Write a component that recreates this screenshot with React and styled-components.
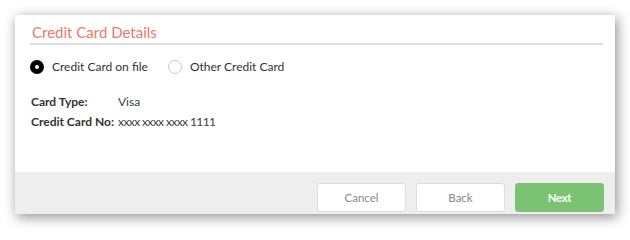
import React, { useState } from "react";
import styled, { createGlobalStyle } from "styled-components";

const Global = createGlobalStyle`
  html, body { margin: 0; padding: 0; background: #fff; }
  body { font-family: Lato, "Liberation Sans", sans-serif; color: #333; }
  * { box-sizing: border-box; }
`;

const Page = styled.div`
  padding: 15px;
  width: 630px;
  height: 230px;
`;

const Card = styled.div`
  width: 600px;
  height: 199px;
  background: #fff;
  box-shadow: 2px 3px 12px rgba(0, 0, 0, 0.45);
  display: flex;
  flex-direction: column;
`;

const Body = styled.div`
  flex: 1;
  padding: 7px 12px 0 15px;
`;

const Title = styled.h2`
  margin: 0;
  font-weight: 400;
  font-size: 15px;
  line-height: 20px;
  color: #f0776c;
  padding: 0 0 1px 2px;
  border-bottom: 2px solid #dedede;
`;

const RadioRow = styled.div`
  display: flex;
  align-items: center;
  gap: 20px;
  margin-top: 13px;
`;

const RadioLabel = styled.label`
  display: flex;
  align-items: center;
  gap: 8px;
  font-size: 12px;
  line-height: 18px;
  color: #333;
  cursor: pointer;
`;

const RadioDot = styled.span`
  width: 14px;
  height: 14px;
  border-radius: 50%;
  background: #fff;
  border: ${(p) => (p.$checked ? "5px solid #000" : "1px solid #c8c8c8")};
`;

const Info = styled.div`
  display: grid;
  grid-template-columns: 87px auto;
  margin-top: 16px;
  padding-left: 1px;
  font-size: 12px;
  line-height: 20px;
  white-space: nowrap;
`;

const Key = styled.span`
  font-weight: 700;
  color: #333;
`;

const Val = styled.span`
  color: #3c3c3c;
  letter-spacing: ${(p) => (p.$tight ? "-0.6px" : "0")};
`;

const Footer = styled.div`
  height: 42px;
  background: #eeeeee;
  display: flex;
  justify-content: flex-end;
  align-items: flex-start;
  gap: 10px;
  padding: 11px 11px 0 0;
`;

const Button = styled.button`
  width: 89px;
  height: 29px;
  border-radius: 3px;
  font-family: inherit;
  font-size: 11.5px;
  cursor: pointer;
  border: 1px solid ${(p) => (p.$primary ? "#7bc373" : "#dcdcdc")};
  background: ${(p) => (p.$primary ? "#7bc373" : "#fff")};
  color: ${(p) => (p.$primary ? "#fff" : "#888")};
  font-weight: ${(p) => (p.$primary ? 700 : 400)};
  letter-spacing: ${(p) => (p.$primary ? "-0.4px" : "0")};
`;

export default function App() {
  const [choice, setChoice] = useState("file");
  return (
    <>
      <Global />
      <Page>
        <Card>
          <Body>
            <Title>Credit Card Details</Title>
            <RadioRow>
              <RadioLabel onClick={() => setChoice("file")}>
                <RadioDot $checked={choice === "file"} />
                Credit Card on file
              </RadioLabel>
              <RadioLabel onClick={() => setChoice("other")}>
                <RadioDot $checked={choice === "other"} />
                Other Credit Card
              </RadioLabel>
            </RadioRow>
            <Info>
              <Key>Card Type:</Key>
              <Val>Visa</Val>
              <Key>Credit Card No:</Key>
              <Val $tight>xxxx xxxx xxxx 1111</Val>
            </Info>
          </Body>
          <Footer>
            <Button>Cancel</Button>
            <Button>Back</Button>
            <Button $primary>Next</Button>
          </Footer>
        </Card>
      </Page>
    </>
  );
}
